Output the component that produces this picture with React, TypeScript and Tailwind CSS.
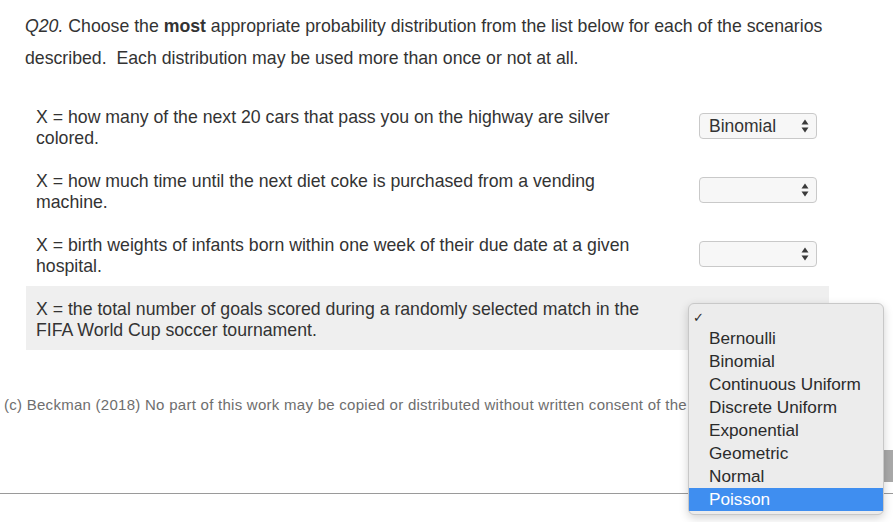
import React from "react";

const rows = [
  ["X = how many of the next 20 cars that pass you on the highway are silver", "colored."],
  ["X = how much time until the next diet coke is purchased from a vending", "machine."],
  ["X = birth weights of infants born within one week of their due date at a given", "hospital."],
];

const values = ["Binomial", "", ""];

const options = [
  "Bernoulli",
  "Binomial",
  "Continuous Uniform",
  "Discrete Uniform",
  "Exponential",
  "Geometric",
  "Normal",
  "Poisson",
];

const Arrows = () => (
  <svg width="8" height="14" viewBox="0 0 8 14" className="shrink-0">
    <path d="M4 0.5 L7.5 5.5 L0.5 5.5 Z" fill="#3a3a3a" />
    <path d="M4 13.5 L7.5 8.5 L0.5 8.5 Z" fill="#3a3a3a" />
  </svg>
);

const FakeSelect: React.FC<{ value: string }> = ({ value }) => (
  <div className="w-[118px] h-[26px] flex items-center justify-between pl-[9px] pr-[7px] rounded-[4px] border border-[#c9c9c9] bg-[#f7f7f7] text-[17.5px] text-[#333]">
    <span>{value}</span>
    <Arrows />
  </div>
);

export default function App() {
  return (
    <div className="relative w-[893px] h-[522px] overflow-hidden bg-white text-[#333] font-['Liberation_Sans',Arial,sans-serif]">
      {/* Question header */}
      <div className="pl-[25px] pt-[10px] text-[17.7px] leading-[32px]">
        <div className="whitespace-nowrap">
          <i>Q20.</i> Choose the <b>most</b> appropriate probability distribution from the list below for each of the scenarios
        </div>
        <div className="whitespace-nowrap">described.&nbsp; Each distribution may be used more than once or not at all.</div>
      </div>

      {/* Scenario rows */}
      <div className="mt-[20px] ml-[26px] w-[803px]">
        {rows.map((r, i) => (
          <div key={i} className="h-[64px] flex items-center pl-[10px]">
            <div className="w-[663px] text-[17.7px] leading-[21px] pt-[3px]">
              <div className="whitespace-nowrap">{r[0]}</div>
              <div>{r[1]}</div>
            </div>
            <FakeSelect value={values[i]} />
          </div>
        ))}
        <div className="h-[64px] flex items-center pl-[10px] bg-[#efefef]">
          <div className="w-[663px] text-[17.7px] leading-[21px] pt-[3px]">
            <div className="whitespace-nowrap">X = the total number of goals scored during a randomly selected match in the</div>
            <div>FIFA World Cup soccer tournament.</div>
          </div>
        </div>
      </div>

      {/* Footer, the rest is hidden by the open popup */}
      <div className="mt-[47px] pl-[4px] text-[15px] leading-[16px] tracking-[0.27px] text-[#6e6e6e] whitespace-nowrap">
        (c) Beckman (2018) No part of this work may be copied or distributed without written consent of the
      </div>
      <div className="mt-[80px] h-px bg-[#9a9a9a] w-full" />

      {/* partial button behind popup */}
      <div className="absolute left-[880px] top-[450px] w-[20px] h-[32px] bg-[#a9a9a9]" />

      {/* Open dropdown */}
      <div className="absolute left-[688px] top-[303px] w-[196px] h-[212px] rounded-[6px] border border-[#c8c8c8] bg-[#ececec] shadow-[0_3px_10px_rgba(0,0,0,0.18)] pt-[4px] text-[17.2px] text-[#2b2b2b]">
        <div className="h-[19px] pl-[4px] text-[13px] leading-[19px]">✓</div>
        {options.map((o) => (
          <div
            key={o}
            className={
              o === "Poisson"
                ? "h-[23px] leading-[23px] pl-[20px] bg-[#3f8ef0] text-white"
                : "h-[23px] leading-[23px] pl-[20px]"
            }
          >
            {o}
          </div>
        ))}
      </div>
    </div>
  );
}
